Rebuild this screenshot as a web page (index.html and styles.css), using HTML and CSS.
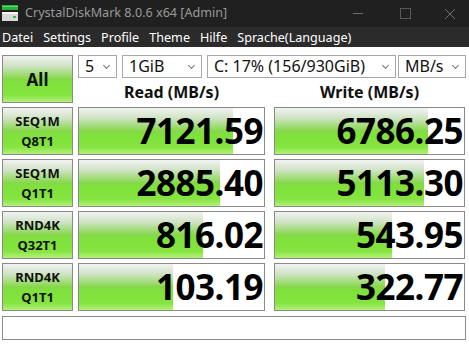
FILE: index.html
```html
<!DOCTYPE html>
<html lang="en">
<head>
  <meta charset="UTF-8">
  <title>CrystalDiskMark 8.0.6 x64 [Admin]</title>
  <link rel="stylesheet" href="styles.css">
</head>
<body>

  <!-- Title bar -->
  <div class="titlebar">
    <svg class="app-icon" width="16" height="16" viewBox="0 0 16 16">
      <rect x="0" y="0" width="16" height="5" fill="#22b33a"/>
      <rect x="0" y="1" width="16" height="1" fill="#5fdc62"/>
      <rect x="0" y="7" width="16" height="9" fill="#d8d8d8"/>
      <rect x="0" y="7" width="16" height="2" fill="#f4f4f4"/>
      <rect x="11" y="11" width="3" height="2" fill="#2ec040"/>
    </svg>
    <span class="title">CrystalDiskMark 8.0.6 x64 [Admin]</span>
    <div class="controls">
      <span class="ctl-min"></span>
      <span class="ctl-max"></span>
      <svg class="ctl-close" width="10" height="10" viewBox="0 0 10 10">
        <path d="M0 0 L10 10 M10 0 L0 10" stroke="#6e6e6e" stroke-width="1"/>
      </svg>
    </div>
  </div>

  <!-- Menu bar -->
  <div class="menubar">
    <span>Datei</span>
    <span>Settings</span>
    <span>Profile</span>
    <span>Theme</span>
    <span>Hilfe</span>
    <span>Sprache(Language)</span>
  </div>

  <div class="main">
    <div class="top">
      <div class="btn all">All</div>
      <div class="top-right">
        <div class="selects">
          <div class="select w-count">5<span class="chev"></span></div>
          <div class="select w-size">1GiB<span class="chev"></span></div>
          <div class="select w-drive">C: 17% (156/930GiB)<span class="chev"></span></div>
          <div class="select w-unit">MB/s<span class="chev"></span></div>
        </div>
        <div class="headers">
          <div class="col-read">Read (MB/s)</div>
          <div class="col-write">Write (MB/s)</div>
        </div>
      </div>
    </div>

    <div class="row">
      <div class="btn label">SEQ1M<br>Q8T1</div>
      <div class="cell col-read"><div class="bar" style="width: 83%"></div><span>7121.59</span></div>
      <div class="cell col-write"><div class="bar" style="width: 81%"></div><span>6786.25</span></div>
    </div>
    <div class="row">
      <div class="btn label">SEQ1M<br>Q1T1</div>
      <div class="cell col-read"><div class="bar" style="width: 76%"></div><span>2885.40</span></div>
      <div class="cell col-write"><div class="bar" style="width: 79%"></div><span>5113.30</span></div>
    </div>
    <div class="row">
      <div class="btn label">RND4K<br>Q32T1</div>
      <div class="cell col-read"><div class="bar" style="width: 67%"></div><span>816.02</span></div>
      <div class="cell col-write"><div class="bar" style="width: 62%"></div><span>543.95</span></div>
    </div>
    <div class="row">
      <div class="btn label">RND4K<br>Q1T1</div>
      <div class="cell col-read"><div class="bar" style="width: 51%"></div><span>103.19</span></div>
      <div class="cell col-write"><div class="bar" style="width: 58%"></div><span>322.77</span></div>
    </div>

    <div class="comment"></div>
  </div>

</body>
</html>
```

FILE: styles.css
```css
body {
  margin: 0;
  background-color: white;
  font-family: "Noto Sans", "Open Sans", sans-serif;
  width: 469px;
  height: 345px;
  overflow: hidden;
}

.titlebar {
  height: 27px;
  background-color: #202020;
  display: flex;
  align-items: center;
  padding-left: 2px;
}

.app-icon {
  margin-top: -1px;
}

.title {
  color: #9a9a9a;
  font-size: 12.6px;
  margin-left: 7px;
  margin-top: -2px;
}

.controls {
  margin-left: auto;
  display: flex;
  align-items: center;
}

.ctl-min {
  width: 10px;
  height: 1px;
  background-color: #6e6e6e;
  margin-right: 37px;
}

.ctl-max {
  width: 9px;
  height: 9px;
  border: 1px solid #5a5a5a;
  margin-right: 34px;
}

.ctl-close {
  margin-right: 14px;
}

.menubar {
  height: 20px;
  background-color: #2b2b2b;
  color: white;
  font-size: 12.6px;
  display: flex;
  align-items: center;
  padding-left: 2px;
}

.menubar span {
  margin-right: 10px;
}

.main {
  padding: 8px 3px 0 2px;
}

.top {
  display: flex;
  height: 48px;
}

.btn {
  box-sizing: border-box;
  width: 71px;
  border: 1px solid #8a8a8a;
  background: linear-gradient(to bottom, #f2f2f2 0%, #cfe3c4 22%, #86d84a 50%, #7ee23a 60%, #86e440 85%, #b2f27a 100%);
  color: #111;
  font-weight: bold;
  display: flex;
  align-items: center;
  justify-content: center;
  text-align: center;
}

.all {
  height: 48px;
  font-size: 17px;
}

.top-right {
  margin-left: 5px;
  width: 388px;
}

.selects {
  display: flex;
  height: 23px;
}

.select {
  box-sizing: border-box;
  height: 23px;
  border: 1px solid #a8a8a8;
  background-color: white;
  font-size: 16px;
  line-height: 21px;
  padding-left: 6px;
  position: relative;
  color: #111;
  margin-right: 5px;
}

.chev {
  position: absolute;
  right: 7px;
  top: 7px;
  width: 4px;
  height: 4px;
  border-right: 1px solid #777;
  border-bottom: 1px solid #777;
  transform: rotate(45deg);
}

.w-count { width: 39px; }
.w-size { width: 80px; }
.w-drive { width: 189px; margin-right: 2px; }
.w-unit { width: 68px; margin-right: 0; }

.headers {
  display: flex;
  height: 25px;
  align-items: flex-end;
  font-weight: bold;
  font-size: 16px;
  color: #111;
  text-align: center;
}

.col-read {
  width: 187px;
  box-sizing: border-box;
}

.col-write {
  width: 191px;
  margin-left: 9px;
  box-sizing: border-box;
}

.headers div {
  line-height: 22px;
}

.row {
  display: flex;
  height: 48px;
  margin-top: 4px;
}

.label {
  height: 48px;
  font-size: 13px;
  line-height: 20px;
}

.cell {
  position: relative;
  height: 48px;
  border: 1px solid #8a8a8a;
  background-color: white;
  display: flex;
  align-items: center;
  justify-content: flex-end;
  overflow: hidden;
}

.row .col-read {
  margin-left: 5px;
}

.bar {
  position: absolute;
  left: 0;
  top: 0;
  bottom: 0;
  background: linear-gradient(to bottom, #f2f2f2 0%, #cfe3c4 22%, #86d84a 50%, #7ee23a 60%, #86e440 85%, #b2f27a 100%);
}

.cell span {
  position: relative;
  font-size: 35px;
  font-weight: bold;
  color: black;
  padding-right: 1px;
  line-height: 46px;
  letter-spacing: -0.5px;
}

.comment {
  box-sizing: border-box;
  margin-top: 5px;
  height: 24px;
  width: 464px;
  border: 1px solid #8a8a8a;
}
```
